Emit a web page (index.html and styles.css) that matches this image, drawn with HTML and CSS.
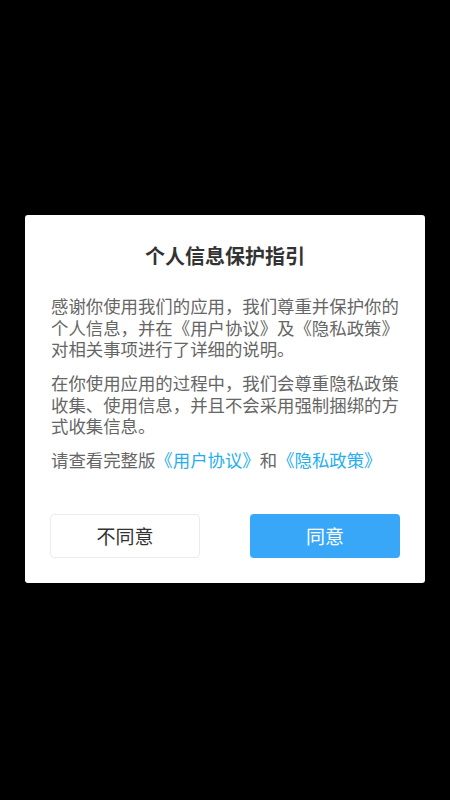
FILE: index.html
```html
<!DOCTYPE html>
<html lang="zh-CN">
<head>
<meta charset="utf-8">
<link rel="stylesheet" href="styles.css">
</head>
<body>
<div class="screen">
  <div class="dialog">
    <h1 class="title">个人信息保护指引</h1>
    <p class="para">感谢你使用我们的应用，我们尊重并保护你的个人信息，并在《用户协议》及《隐私政策》对相关事项进行了详细的说明。</p>
    <p class="para">在你使用应用的过程中，我们会尊重隐私政策收集、使用信息，并且不会采用强制捆绑的方式收集信息。</p>
    <p class="para">请查看完整版<span class="link">《用户协议》</span>和<span class="link">《隐私政策》</span></p>
    <div class="actions">
      <button class="btn btn-cancel">不同意</button>
      <button class="btn btn-ok">同意</button>
    </div>
  </div>
</div>
</body>
</html>
```

FILE: styles.css
```css
html, body {
  margin: 0;
  padding: 0;
  background: #000;
}
body {
  font-family: "Noto Sans CJK SC", "Noto Sans", sans-serif;
}
.screen {
  width: 450px;
  height: 800px;
  display: flex;
  align-items: center;
  justify-content: center;
}
.dialog {
  width: 400px;
  box-sizing: border-box;
  background: #fff;
  border-radius: 3px;
  padding: 27px 26px 25px 26px;
  margin-top: -2px;
}
.title {
  margin: 0 0 25px 0;
  font-size: 20px;
  line-height: 28px;
  font-weight: 700;
  color: #333;
  text-align: center;
}
.para {
  margin: 0 0 12.5px 0;
  font-size: 17.4px;
  line-height: 21.5px;
  color: #666;
}
.link {
  color: #26aef0;
}
.actions {
  margin-top: 43px;
  display: flex;
  justify-content: space-between;
  margin-left: -1px;
  margin-right: -1px;
}
.btn {
  width: 150px;
  height: 44px;
  border-radius: 4px;
  font-family: "Noto Sans CJK SC", "Noto Sans", sans-serif;
  font-size: 19px;
  padding: 0;
  cursor: pointer;
}
.btn-cancel {
  background: #fff;
  border: 1px solid #ececec;
  color: #333;
}
.btn-ok {
  background: #38a7f8;
  border: none;
  color: #fff;
}
```
